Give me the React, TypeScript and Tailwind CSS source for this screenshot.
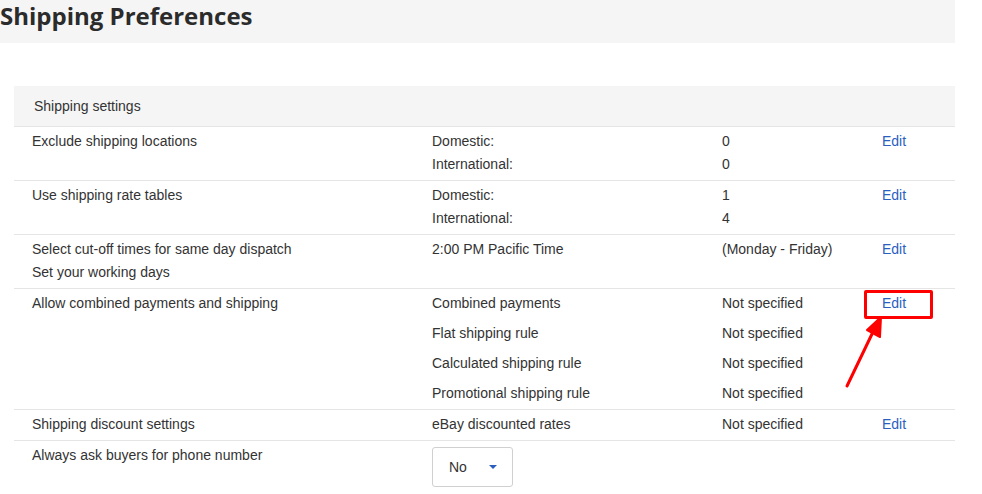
import React from 'react';

type Row = {
  label: string[];
  keys: string[];
  values: string[];
  edit?: boolean;
  gap?: boolean;
};

const rows: Row[] = [
  { label: ['Exclude shipping locations'], keys: ['Domestic:', 'International:'], values: ['0', '0'], edit: true },
  { label: ['Use shipping rate tables'], keys: ['Domestic:', 'International:'], values: ['1', '4'], edit: true },
  {
    label: ['Select cut-off times for same day dispatch', 'Set your working days'],
    keys: ['2:00 PM Pacific Time'],
    values: ['(Monday - Friday)'],
    edit: true,
  },
  {
    label: ['Allow combined payments and shipping'],
    keys: ['Combined payments', 'Flat shipping rule', 'Calculated shipping rule', 'Promotional shipping rule'],
    values: ['Not specified', 'Not specified', 'Not specified', 'Not specified'],
    edit: true,
    gap: true,
  },
  { label: ['Shipping discount settings'], keys: ['eBay discounted rates'], values: ['Not specified'], edit: true },
];

const Lines = ({ items, gap }: { items: string[]; gap?: boolean }) => (
  <div className={gap ? 'flex flex-col gap-[7px]' : 'flex flex-col'}>
    {items.map((t, i) => (
      <div key={i}>{t}</div>
    ))}
  </div>
);

export default function App() {
  return (
    <div className="relative w-[982px] h-[494px] overflow-hidden bg-white font-['Liberation_Sans',Arial,sans-serif] text-[14px] leading-[23px] text-[#333]">
      <div className="w-[955px] h-[43px] bg-[#f5f5f5] flex items-start">
        <h1 className="text-[24px] leading-[31px] font-bold text-[#2b2b2b] font-['Open_Sans','Liberation_Sans',sans-serif]">
          Shipping Preferences
        </h1>
      </div>

      <div className="ml-[14px] mt-[43px] w-[941px]">
        <div className="h-[40px] bg-[#f5f5f5] flex items-center pl-[20px]">Shipping settings</div>

        {rows.map((r, i) => (
          <div
            key={i}
            className="grid grid-cols-[400px_290px_160px_1fr] pl-[18px] pt-[3px] pb-[4px] border-t border-[#e5e5e5] first:border-t-0"
          >
            <Lines items={r.label} />
            <Lines items={r.keys} gap={r.gap} />
            <Lines items={r.values} gap={r.gap} />
            <div>{r.edit && <a className="text-[#2a5fbf] cursor-pointer">Edit</a>}</div>
          </div>
        ))}

        <div className="grid grid-cols-[400px_290px_160px_1fr] pl-[18px] pt-[3px] pb-[4px] border-t border-[#e5e5e5]">
          <div>Always ask buyers for phone number</div>
          <div>
            <div className="mt-[3px] w-[81px] h-[40px] border border-[#d0d0d0] rounded-[3px] flex items-center pl-[16px] pr-[15px] justify-between">
              <span>No</span>
              <span className="w-0 h-0 border-l-[4px] border-r-[4px] border-t-[4px] border-l-transparent border-r-transparent border-t-[#2a5fbf]" />
            </div>
          </div>
        </div>
      </div>

      {/* annotation overlay */}
      <div className="absolute left-[864px] top-[290px] w-[69px] h-[29px] border-[3px] border-[#ff0000] rounded-[2px]" />
      <svg className="absolute left-0 top-0" width="982" height="494" viewBox="0 0 982 494">
        <line x1="847" y1="386" x2="872" y2="334" stroke="#ff0000" strokeWidth="3" strokeLinecap="round" />
        <polygon points="881,317 867,330 880,337" fill="#ff0000" stroke="#ff0000" strokeWidth="2" strokeLinejoin="round" />
      </svg>
    </div>
  );
}
